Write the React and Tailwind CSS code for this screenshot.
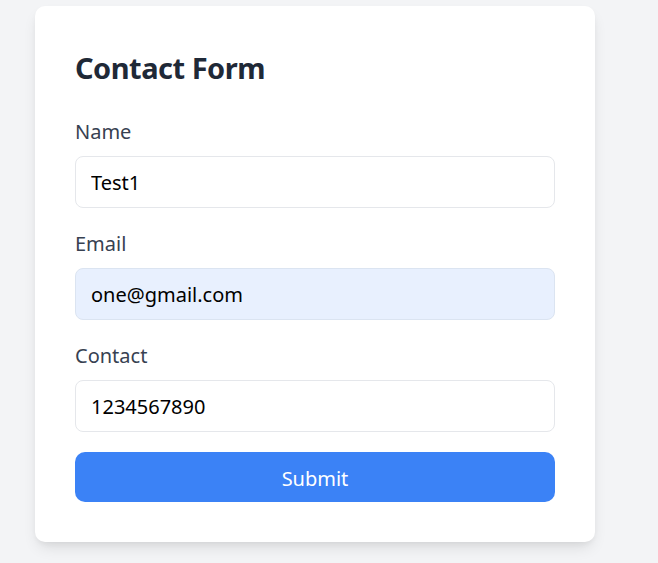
import React, { useState } from "react";

const ContactForm = () => {
  const [name, setName] = useState("Test1");
  const [email, setEmail] = useState("one@gmail.com");
  const [contact, setContact] = useState("1234567890");

  const handleSubmit = (e) => {
    e.preventDefault();
  };

  return (
    <div
      className="min-h-[563px] bg-[#f3f4f6] pt-[6px] pl-[35px]"
      style={{ fontFamily: '"Noto Sans", "Open Sans", sans-serif' }}
    >
      <div className="w-[560px] bg-white rounded-[10px] shadow-[0_8px_16px_-4px_rgba(0,0,0,0.12),0_3px_6px_-2px_rgba(0,0,0,0.06)] p-[40px]">
        <h2 className="text-[29px] leading-[40px] tracking-[-0.5px] font-bold text-[#1f2937] mt-[2px] mb-[28px]">Contact Form</h2>

        <form onSubmit={handleSubmit}>
          <div className="mb-[20px]">
            <label className="block text-[20px] leading-[32px] text-[#374151] mb-[8px]">Name</label>
            <input
              type="text"
              value={name}
              onChange={(e) => setName(e.target.value)}
              className="w-full h-[52px] px-[15px] text-[20px] text-black border border-[#e5e7eb] rounded-[8px] bg-white outline-none"
            />
          </div>

          <div className="mb-[20px]">
            <label className="block text-[20px] leading-[32px] text-[#374151] mb-[8px]">Email</label>
            <input
              type="email"
              value={email}
              onChange={(e) => setEmail(e.target.value)}
              className="w-full h-[52px] px-[15px] text-[20px] text-black border border-[#dbe4f1] rounded-[8px] bg-[#e8f0fe] outline-none"
            />
          </div>

          <div className="mb-[20px]">
            <label className="block text-[20px] leading-[32px] text-[#374151] mb-[8px]">Contact</label>
            <input
              type="text"
              value={contact}
              onChange={(e) => setContact(e.target.value)}
              className="w-full h-[52px] px-[15px] text-[20px] text-black border border-[#e5e7eb] rounded-[8px] bg-white outline-none"
            />
          </div>

          <button
            type="submit"
            className="w-full h-[50px] pt-[3px] bg-[#3b82f6] text-white text-[20px] rounded-[10px]"
          >
            Submit
          </button>
        </form>
      </div>
    </div>
  );
};

export default function App() {
  return <ContactForm />;
}
